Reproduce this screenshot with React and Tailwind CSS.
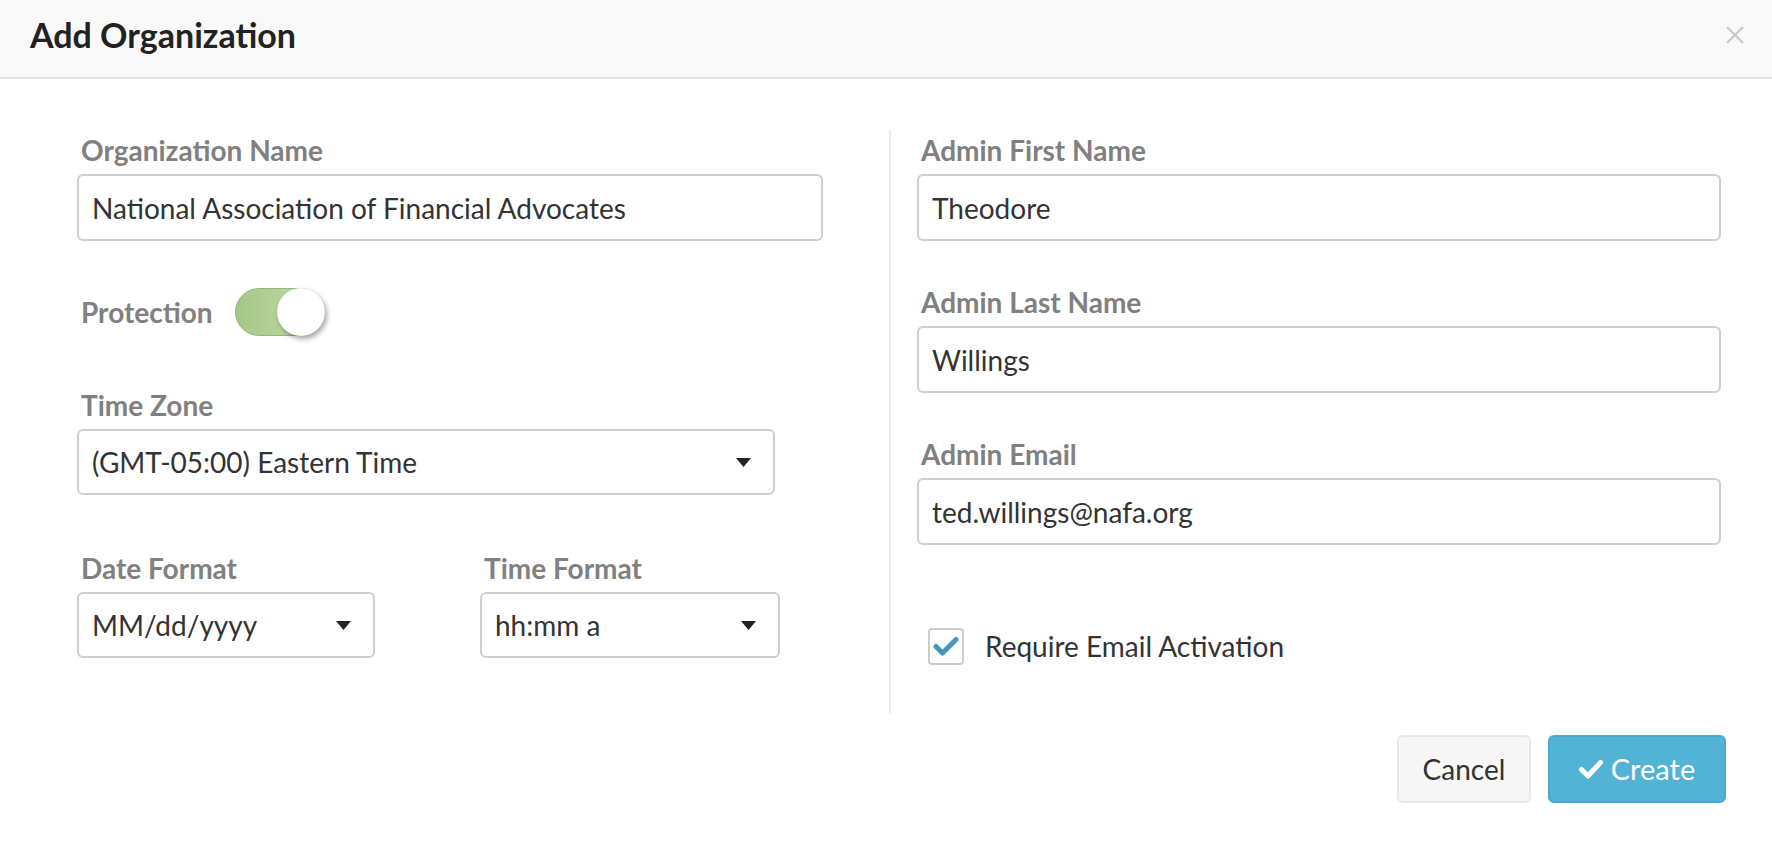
import { useState } from 'react'

const font = { fontFamily: 'Lato, "Open Sans", sans-serif' }

function Label({ children, className = '' }) {
  return (
    <label className={`block pl-[4px] text-[28px] leading-[30px] font-bold text-[#808080] mb-[9px] ${className}`}>
      {children}
    </label>
  )
}

function TextInput({ value }) {
  return (
    <div className="h-[67px] w-full flex items-center px-[13px] border-2 border-[#cfcfcf] rounded-[6px] bg-white text-[28px] text-[#333]">
      {value}
    </div>
  )
}

function Select({ value, className = '' }) {
  return (
    <div className={`h-[66px] flex items-center justify-between pl-[13px] pr-[22px] border-2 border-[#cfcfcf] rounded-[6px] bg-white text-[28px] text-[#333] ${className}`}>
      <span>{value}</span>
      <svg width="15" height="9" viewBox="0 0 15 9"><path d="M0 0h15L7.5 9z" fill="#222" /></svg>
    </div>
  )
}

export default function App() {
  const [on, setOn] = useState(true)
  const [checked, setChecked] = useState(true)

  return (
    <div className="w-[1772px] h-[848px] bg-white overflow-hidden" style={font}>
      <header className="h-[79px] bg-[#f9f9f9] border-b-2 border-[#e5e5e5] flex items-center justify-between pl-[30px] pr-[27px] pb-[8px]">
        <h1 className="text-[34px] font-bold text-[#222]">Add Organization</h1>
        <svg width="20" height="20" viewBox="0 0 20 20">
          <path d="M2 2L18 18M18 2L2 18" stroke="#c8c8c8" strokeWidth="2.2" />
        </svg>
      </header>

      <div className="flex pl-[77px] pr-[51px] pt-[51px]">
        {/* left column */}
        <div className="w-[746px] pt-[5px]">
          <Label>Organization Name</Label>
          <TextInput value="National Association of Financial Advocates" />

          <div className="flex items-center h-[50px] mt-[46px] pl-[4px]">
            <span className="text-[28px] font-bold text-[#808080] mr-[22px]">Protection</span>
            <button
              onClick={() => setOn(!on)}
              className="relative w-[90px] h-[48px] rounded-full border border-[#98b878] bg-gradient-to-r from-[#a5c784] to-[#c6ddb0]"
            >
              <span className="absolute right-[-1px] top-[-1px] w-[48px] h-[48px] rounded-full bg-white shadow-[2px_3px_5px_rgba(0,0,0,0.35)]" />
            </button>
          </div>

          <div className="mt-[53px]">
            <Label>Time Zone</Label>
            <Select value="(GMT-05:00) Eastern Time" className="w-[698px]" />
          </div>

          <div className="flex mt-[58px]">
            <div className="w-[298px]">
              <Label>Date Format</Label>
              <Select value="MM/dd/yyyy" />
            </div>
            <div className="w-[300px] ml-[105px]">
              <Label>Time Format</Label>
              <Select value="hh:mm a" />
            </div>
          </div>
        </div>

        <div className="ml-[66px] w-[2px] h-[584px] bg-[#ededed]" />

        {/* right column */}
        <div className="flex-1 pl-[26px] pt-[5px]">
          <Label>Admin First Name</Label>
          <TextInput value="Theodore" />

          <Label className="mt-[46px]">Admin Last Name</Label>
          <TextInput value="Willings" />

          <Label className="mt-[46px]">Admin Email</Label>
          <TextInput value="ted.willings@nafa.org" />

          <div className="flex items-center mt-[80px] ml-[11px]">
            <button
              onClick={() => setChecked(!checked)}
              className="w-[36px] h-[37px] border-2 border-[#cccccc] rounded-[4px] flex items-center justify-center bg-white"
            >
              {checked && (
                <svg width="26" height="20" viewBox="0 0 26 20">
                  <path d="M3 10.5L9.5 17L23 3.5" stroke="#4199b8" strokeWidth="5" fill="none" strokeLinecap="round" strokeLinejoin="round" />
                </svg>
              )}
            </button>
            <span className="ml-[21px] text-[28px] text-[#333]">Require Email Activation</span>
          </div>
        </div>
      </div>

      <div className="flex justify-end gap-[17px] pr-[46px] mt-[21px]">
        <button className="w-[134px] h-[68px] rounded-[6px] bg-[#f7f7f7] border-2 border-[#e8e8e8] text-[28px] text-[#333]">
          Cancel
        </button>
        <button className="w-[178px] h-[68px] rounded-[6px] bg-[#52b3d5] border-2 border-[#4aa9cc] text-[29px] text-white flex items-center justify-center gap-[8px]">
          <svg width="24" height="20" viewBox="0 0 24 20">
            <path d="M2.5 10.5L9 17L21.5 3.5" stroke="#fff" strokeWidth="5" fill="none" strokeLinecap="round" strokeLinejoin="round" />
          </svg>
          Create
        </button>
      </div>
    </div>
  )
}
